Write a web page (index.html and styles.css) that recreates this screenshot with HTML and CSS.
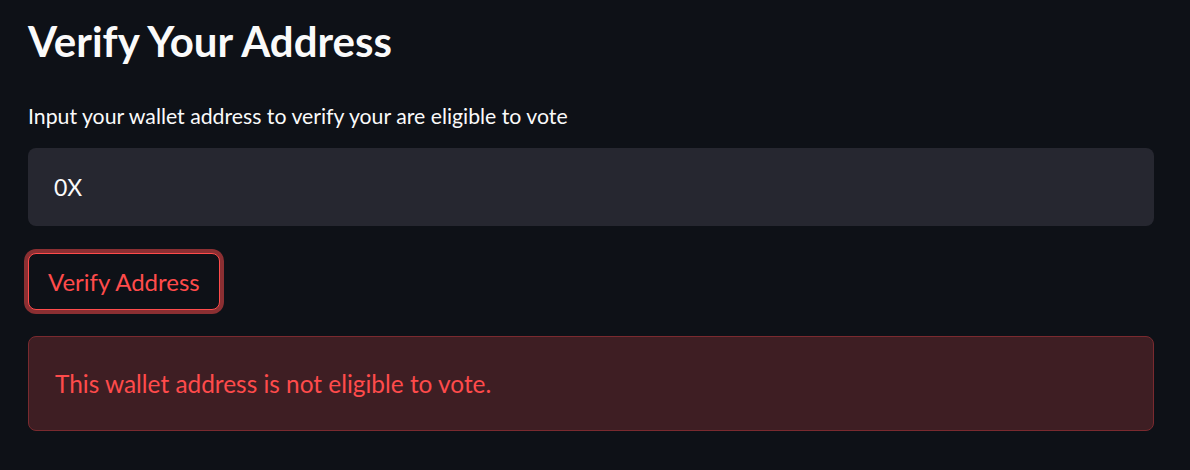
FILE: index.html
```html
<!DOCTYPE html>
<html lang="en">
<head>
<meta charset="utf-8">
<title>Verify Your Address</title>
<link rel="stylesheet" href="styles.css">
</head>
<body>
<main class="page">
  <h1 class="title">Verify Your Address</h1>
  <label class="label" for="addr">Input your wallet address to verify your are eligible to vote</label>
  <div class="field">
    <input id="addr" class="input" type="text" value="0X">
  </div>
  <div class="actions">
    <button class="btn" type="button">Verify Address</button>
  </div>
  <div class="alert">This wallet address is not eligible to vote.</div>
</main>
</body>
</html>
```

FILE: styles.css
```css
html, body {
  margin: 0;
  padding: 0;
  background: #0e1117;
}

body {
  font-family: Lato, "Noto Sans", sans-serif;
  color: #fafafa;
}

.page {
  display: flex;
  flex-direction: column;
  padding: 0 36px 0 28px;
}

.title {
  margin: 16px 0 0;
  font-size: 42px;
  line-height: 50px;
  font-weight: 700;
  color: #fafafa;
}

.label {
  margin-top: 37px;
  font-size: 21.25px;
  line-height: 26px;
  color: #fafafa;
}

.field {
  margin-top: 19px;
}

.input {
  box-sizing: border-box;
  display: block;
  width: 100%;
  height: 78px;
  border: none;
  border-radius: 8px;
  background: #262730;
  color: #fafafa;
  font-family: inherit;
  font-size: 23px;
  padding: 0 26px;
  outline: none;
}

.actions {
  margin-top: 27px;
  display: flex;
}

.btn {
  box-sizing: border-box;
  height: 57px;
  width: 192px;
  border: 1px solid #ff4b4b;
  border-radius: 8px;
  background: #0e1117;
  color: #ff4b4b;
  font-family: inherit;
  font-size: 24px;
  padding: 0 19px;
  box-shadow: 0 0 0 4px rgba(255, 75, 75, 0.52);
  text-align: left;
}

.alert {
  box-sizing: border-box;
  margin-top: 26px;
  height: 95px;
  display: flex;
  align-items: center;
  padding: 0 26px;
  border: 1px solid #7a2a2f;
  border-radius: 8px;
  background: #3e1e23;
  color: #ff4b4b;
  font-size: 24.4px;
}
```
